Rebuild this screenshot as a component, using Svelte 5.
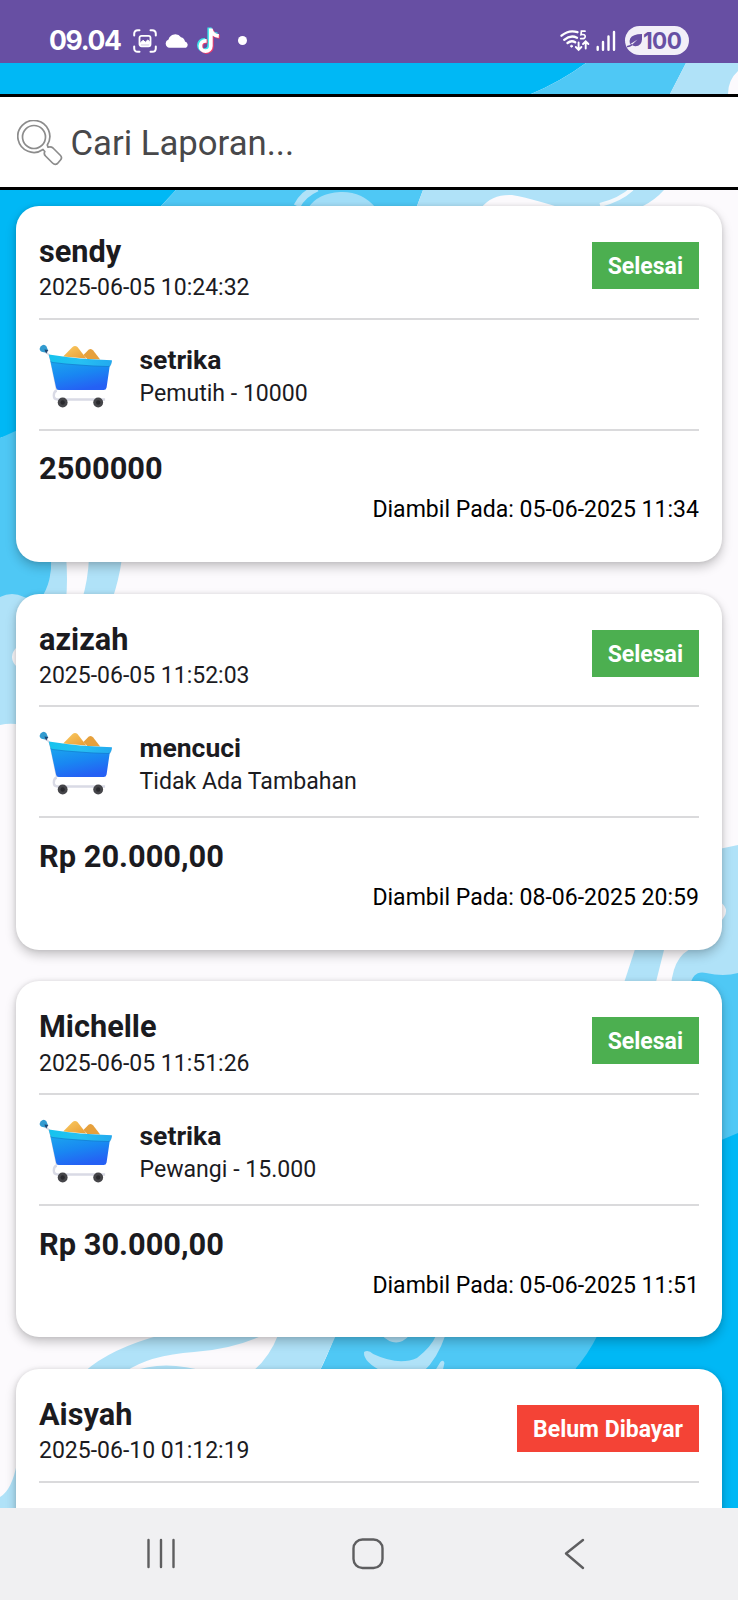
<script>
  const orders = [
    { name: 'sendy', created: '2025-06-05 10:24:32', status: 'Selesai', done: true, service: 'setrika', extra: 'Pemutih - 10000', total: '2500000', taken: 'Diambil Pada: 05-06-2025 11:34' },
    { name: 'azizah', created: '2025-06-05 11:52:03', status: 'Selesai', done: true, service: 'mencuci', extra: 'Tidak Ada Tambahan', total: 'Rp 20.000,00', taken: 'Diambil Pada: 08-06-2025 20:59' },
    { name: 'Michelle', created: '2025-06-05 11:51:26', status: 'Selesai', done: true, service: 'setrika', extra: 'Pewangi - 15.000', total: 'Rp 30.000,00', taken: 'Diambil Pada: 05-06-2025 11:51' },
    { name: 'Aisyah', created: '2025-06-10 01:12:19', status: 'Belum Dibayar', done: false }
  ];
</script>

<div class="screen">
  <header class="status">
    <div class="left">
      <span class="time">09.04</span>
      <svg class="shot" width="24" height="24" viewBox="0 0 24 24" fill="none" stroke="#fff" stroke-width="2" stroke-linecap="round">
        <path d="M1.2 6.5V4.8Q1.2 1.2 4.8 1.2H6.5M17.5 1.2h1.7q3.6 0 3.6 3.6v1.7M22.8 17.5v1.7q0 3.6-3.6 3.6h-1.7M6.5 22.8H4.8Q1.2 22.8 1.2 19.2V17.5" />
        <rect x="6.5" y="6.8" width="11" height="10.5" rx="2" stroke-width="1.8" />
        <path d="M7.5 15.8v-2l2.500-2.500 2.500 2 2.200-2.400 2.100 2v2.900z" fill="#fff" stroke-width="1" />
      </svg>
      <svg class="cloud" width="24" height="14" viewBox="0 0 24 14" fill="#fff">
        <path d="M4.500 13.700A4.300 4.300 0 0 1 3.500 5.400 7 7 0 0 1 16 3.300 5.500 5.500 0 0 1 20 7.600 3.300 3.300 0 0 1 21 13.700z" />
      </svg>
      <svg class="tok" width="24" height="28" viewBox="0 0 24 28" fill="none" stroke-width="4">
        <path d="M13 1v17.500a5.200 5.200 0 1 1-5.200-5.200h1M13 1q1 6.500 8 7" stroke="#3ee6ea" transform="translate(-.6 -.4)" />
        <path d="M14.500 2.500V19.500a5.200 5.200 0 1 1-5.200-5.200h1M14.500 2.500q1 6.500 8 7" stroke="#f23c6b" transform="translate(.2 .2)" />
        <path d="M13.800 1.500v17.500a5.200 5.200 0 1 1-5.200-5.200h1M13.800 2q1 6.500 8 7" stroke="#fff" stroke-width="3.800" />
      </svg>
      <i class="dot"></i>
    </div>
    <div class="right">
      <svg class="wifi" width="30" height="23" viewBox="0 0 30 23" fill="none" stroke="#fff" stroke-width="2.300" stroke-linecap="round">
        <path d="M1.500 6.700Q9 .3 17.500 3.200M4.200 10.800Q10.500 5.500 17 8.700M7.500 14Q11.500 10.800 15.200 13.300" />
        <circle cx="11.500" cy="17.200" r="1" fill="#fff" stroke-width=".8" />
        <path d="M25 2.200h-3.600l-.4 3.500q4.200-.8 4.200 1.800 0 2.700-4.500 2.100" stroke-width="1.700" />
        <path d="M18.600 13.500v6.800M15.800 18l2.800 2.800 2.800-2.800M25.700 19.500v-6.800M23 15l2.700-2.700L28.400 15" stroke-width="1.900" />
      </svg>
      <svg class="bars" width="20" height="22" viewBox="0 0 20 22" stroke="#fff" stroke-width="2.400" stroke-linecap="round">
        <path d="M1.700 17v2.800M7 12v7.800M12.500 6.500v13.300M18 2v17.800" />
      </svg>
      <div class="battery">
        <svg width="16" height="15" viewBox="0 0 16 15" fill="#674fa3">
          <path d="M15 1v5.500q-.3 6.500-6.500 6.700-2.200.1-3.700-1.100L10.500 6.500 3 11.200Q1.800 8.500 3.200 5.500 5.500 1 15 1z" />
          <path d="M.6 13.600q2.200-.3 4-1.800" fill="none" stroke="#674fa3" stroke-width="1.500" stroke-linecap="round" />
        </svg>
        <span>100</span>
      </div>
    </div>
  </header>

  <main>
    <svg class="waves" width="738" height="1445" viewBox="0 63 738 1445" aria-hidden="true">
      <rect y="63" width="738" height="1445" fill="#fcfafd" />
      <path d="M0 63H586Q560 82 531 94L176 190 161 206 60 420 0 438z" fill="#00b8f5" />
      <path d="M586 63H686L670 94 423 190 417 206H161L176 190 531 94Q560 82 586 63z" fill="#4fc8f5" />
      <path d="M686 63H738V71Q728 80 728 94L664 190Q655 200 643 206H417L423 190 670 94z" fill="#b0e2f8" />
      <path d="M481 208Q492 194 512 195C530 198 548 204 562 208z" fill="#fcfafd" />
      <path d="M632 189Q620 200 600 205" fill="none" stroke="#f4f9fd" stroke-width="4" />
      <path d="M297 206Q303 194 317 188" fill="none" stroke="#b0e2f8" stroke-width="7" />
      <path d="M308 208Q318 193 340 192T376 208z" fill="#b0e2f8" opacity=".85" />
      <path d="M0 438L20 429 50 500Q56 580 44 600H0z" fill="#4fc8f5" />
      <path d="M51 555H66Q68 580 66 600H40Q53 582 51 555z" fill="#b0e2f8" />
      <path d="M0 597Q12 591 24 597L44 604V724H16Q8 723 0 725z" fill="#b0e2f8" />
      <path d="M89 558H122Q119 580 112 600H82Q88 580 89 558z" fill="#b0e2f8" />
      <path d="M18 646Q6 657 18 668z" fill="#fcfafd" />
      <path d="M0 1497Q12 1490 17 1463V1508H0z" fill="#b0e2f8" />
      <path d="M738 845L700 853V946Q674 950 671 986H738z" fill="#b0e2f8" />
      <path d="M636 946H665L655 986H623z" fill="#b0e2f8" />
      <path d="M720 902Q732 910 720 922z" fill="#fcfafd" />
      <path d="M690 986Q693 970 706 973 724 977 738 973V1145H700V986z" fill="#4fc8f5" />
      <path d="M738 1133L700 1149V1310L597 1334 573 1372H700V1508H738z" fill="#00b8f5" />
      <g transform="translate(-1.440 0) scale(1.018 1)">
        <path d="M331 1334H589Q579 1355 564 1372H315Q323 1356 331 1334z" fill="#4fc8f5" />
        <path d="M275 1334H332L315 1372H249Q266 1358 275 1334zM84 1372Q110 1348 163 1334H262Q232 1349 192 1352 148 1355 124 1372zM130 1372Q162 1359 205 1372z" fill="#b0e2f8" />
        <path d="M376 1335Q391 1350 404 1335zM359 1352Q363 1349 368 1354 393 1366 411 1358 425 1347 430 1335H439Q431 1359 417 1372H378Q358 1362 359 1352zM434 1362Q437 1359 438 1363L436 1372H428z" fill="#b0e2f8" />
      </g>
    </svg>

    <div class="search">
      <svg width="46" height="46" viewBox="0 0 46 46" fill="none" stroke="#8c8c8c" stroke-width="1.700">
        <circle cx="17" cy="17" r="11.500" />
        <path d="M26 29.500A16 16 0 1 1 30.300 25L31 27.200Q34 26.300 36 28L43.500 35.500Q45.500 37.800 43.500 40L40.500 43.500Q38 45.500 35.500 43L28.500 36Q26.500 34 27.800 31.500z" stroke-linejoin="round" />
      </svg>
      <span>Cari Laporan...</span>
    </div>

    <section class="list">
      {#each orders as o}
        <article class="card">
          <div class="top">
            <div class="who">
              <strong>{o.name}</strong>
              <span>{o.created}</span>
            </div>
            <span class="badge" class:unpaid={!o.done}>{o.status}</span>
          </div>
          {#if o.service}
            <div class="item">
              <svg width="73" height="66" viewBox="0 0 74 66" preserveAspectRatio="none">
                <defs>
                  <linearGradient id="tub" x1=".1" y1="0" x2=".5" y2="1"><stop offset="0" stop-color="#1ba4ee" /><stop offset=".5" stop-color="#1987f2" /><stop offset="1" stop-color="#2560f4" /></linearGradient>
                  <linearGradient id="rim" x1="0" x2="1"><stop offset="0" stop-color="#15c3ee" /><stop offset=".5" stop-color="#27c0f2" /><stop offset="1" stop-color="#22a9ef" /></linearGradient>
                  <linearGradient id="gold" x1="0" y1="0" x2="1" y2="1"><stop offset="0" stop-color="#fbcc62" /><stop offset="1" stop-color="#e89c36" /></linearGradient>
                </defs>
                <path d="M5 5.500L11 12 18 46" fill="none" stroke="#d5d6e3" stroke-width="1.600" />
                <path d="M1.500 2.500Q5-.8 7.500 2.300L9 6 6 8.500Q.8 8 .6 5z" fill="#329bd0" />
                <path d="M5.500 5.500L9.500 6 7.200 9.800z" fill="#1d4774" />
                <path d="M24.500 12.500L34 3Q36.500 .8 39 3L48 14.500z" fill="url(#gold)" />
                <path d="M45 11L50.500 5.500Q53 4 55 6.500L62 15.500 49 15z" fill="#e6a03c" />
                <path d="M11.500 17L72 20 68.500 43.500Q68 46 65.500 46H20Q17.800 46 17.300 43.500z" fill="url(#tub)" />
                <path d="M10 11.500Q42 16.500 74 17L73 21Q72.500 23 70 23 40 22 14 19 12 19 11.500 17z" fill="#127cc4" opacity=".55" />
                <path d="M10 10.500Q42 15.500 74 16.200L73 20.200Q72.500 22 70 22 40 21 14 18 12 18 11.500 16z" fill="url(#rim)" />
                <path d="M18 46.500Q15 47.500 15 51.500T19 55.500H67" fill="none" stroke="#d9dae5" stroke-width="2.400" />
                <circle cx="24" cy="58.500" r="5" fill="#454549" /><circle cx="24" cy="58.500" r="2.200" fill="#29292d" />
                <circle cx="60" cy="58.500" r="5" fill="#454549" /><circle cx="60" cy="58.500" r="2.200" fill="#29292d" />
              </svg>
              <div class="desc">
                <strong>{o.service}</strong>
                <span>{o.extra}</span>
              </div>
            </div>
            <div class="foot">
              <strong>{o.total}</strong>
              <span>{o.taken}</span>
            </div>
          {/if}
        </article>
      {/each}
    </section>
  </main>

  <nav>
    <svg width="738" height="92" viewBox="0 0 738 92" fill="none" stroke="#5e5e60" stroke-width="2.400" stroke-linecap="round" stroke-linejoin="round">
      <path d="M148.500 32v27M161 32v27M173.500 32v27" />
      <rect x="353.500" y="31.500" width="29" height="28.500" rx="9" />
      <path d="M583 32L566 45.500 583 60" />
    </svg>
  </nav>
</div>

<style>
  :global(body) { background: #f0f0f2; }
  .screen { width: 738px; height: 1600px; display: flex; flex-direction: column; overflow: hidden; font-family: Roboto, sans-serif; color: #1b1b1f; }
  .status { height: 63px; flex: none; background: #674fa3; display: flex; justify-content: space-between; box-sizing: border-box; padding: 17px 49px 0 49px; }
  .left, .right { display: flex; align-items: center; height: 47px; }
  .time { color: #fff; font: 700 26.500px/47px Inter, sans-serif; width: 72px; letter-spacing: -1.300px; white-space: nowrap; }
  .shot { margin-left: 12px; }
  .cloud { margin-left: 8px; }
  .tok { margin-left: 8px; }
  .dot { width: 9px; height: 9px; border-radius: 50%; background: #fff; margin-left: 17px; }
  .bars { margin-left: 6px; }
  .battery { margin-left: 9px; width: 64px; height: 29px; border-radius: 15px; background: #f2eff8; display: flex; align-items: center; padding-left: 2px; box-sizing: border-box; color: #674fa3; }
  .battery span { font: 700 22.500px/28px Inter, sans-serif; letter-spacing: -.6px; }
  main { position: relative; height: 1445px; flex: none; overflow: hidden; box-sizing: border-box; padding-top: 31px; }
  .waves { position: absolute; left: 0; top: 0; z-index: -1; }
  .search { height: 96px; box-sizing: border-box; border-top: 3px solid #000; border-bottom: 3px solid #000; background: #fff; display: flex; align-items: center; padding: 2px 0 0 16.500px; color: #48484a; }
  .search span { font-size: 34.700px; margin-left: 8px; }
  .list { padding: 16px 16px 0; display: flex; flex-direction: column; gap: 31.700px; }
  .card { height: 356px; flex: none; background: #fff; border-radius: 23px; padding: 0 23px; box-sizing: border-box; box-shadow: 0 5px 11px rgba(0, 0, 0, .22), 0 0 4px rgba(0, 0, 0, .1); }
  .top { height: 113.700px; border-bottom: 2px solid #dadadc; display: flex; justify-content: space-between; box-sizing: border-box; }
  .who, .desc, .foot { display: flex; flex-direction: column; }
  strong { font-weight: 700; }
  .who strong { font-size: 30.700px; line-height: 36px; margin-top: 28px; }
  .who span { font-size: 23px; line-height: 28px; margin-top: 4.200px; }
  .badge { height: 47px; box-sizing: border-box; margin-top: 36px; padding: 1px 16px 0; background: #4caf50; color: #fff; font-size: 23px; font-weight: 700; line-height: 48px; }
  .unpaid { background: #f44336; }
  .item { height: 111px; box-sizing: border-box; border-bottom: 2px solid #dadadc; display: flex; }
  .item svg { margin-top: 24px; }
  .desc { margin-left: 27.500px; }
  .desc strong { font-size: 26.500px; line-height: 30px; margin-top: 25.500px; }
  .desc span { font-size: 23.100px; line-height: 28px; margin-top: 5px; }
  .foot strong { font-size: 30.800px; line-height: 36px; margin-top: 20.500px; }
  .foot span { font-size: 23.050px; line-height: 28px; align-self: flex-end; color: #000; margin-top: 9px; }
  nav { flex: 1; background: #f0f0f2; }
  nav svg { display: block; }
</style>
